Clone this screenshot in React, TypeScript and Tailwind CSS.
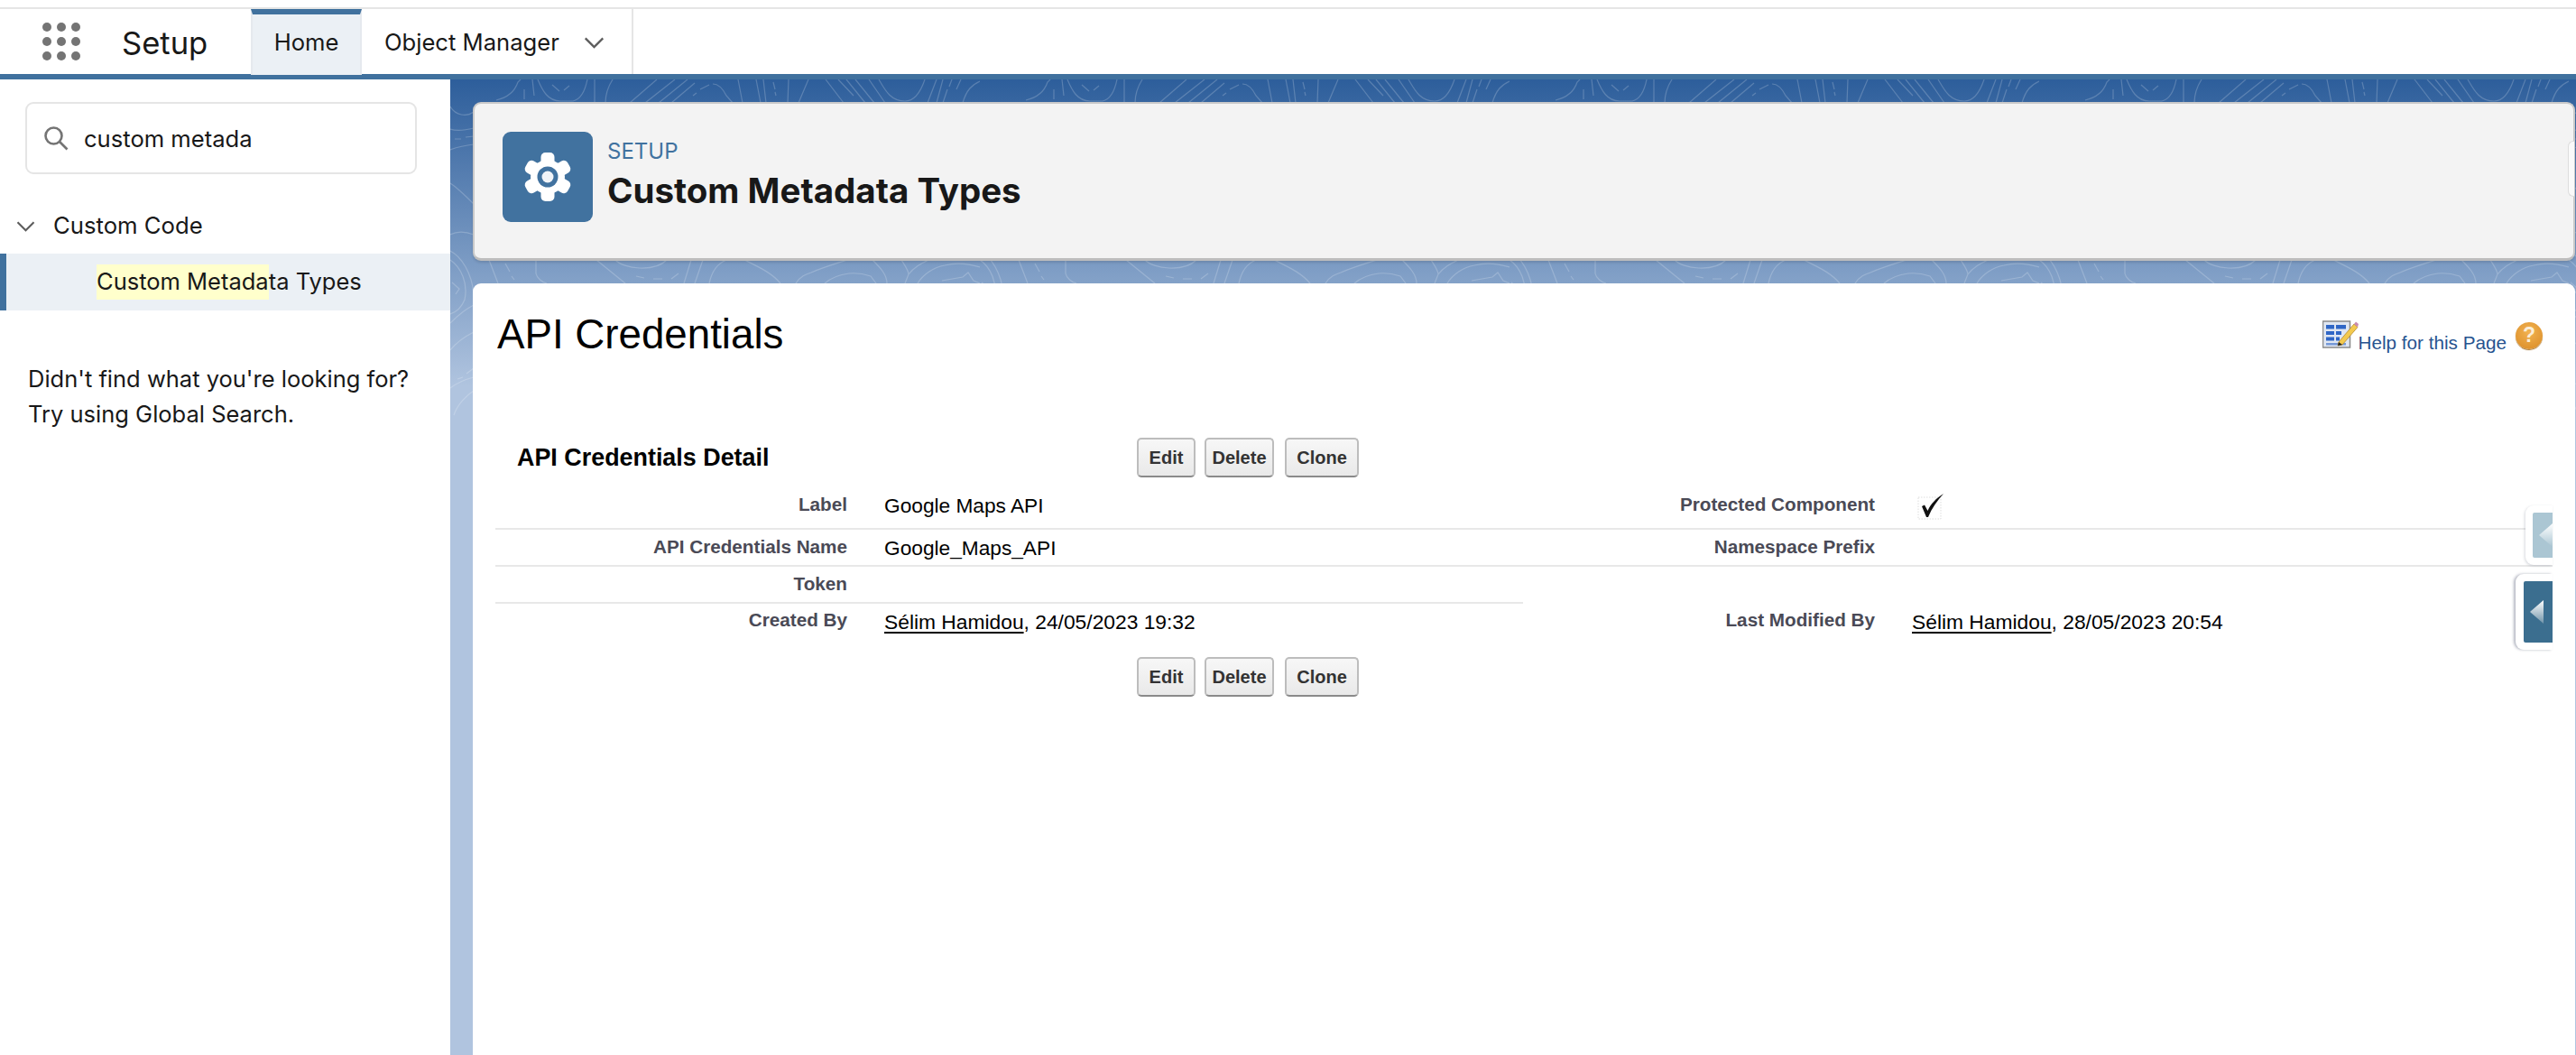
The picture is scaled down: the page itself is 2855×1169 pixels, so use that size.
const Dots = () => (
  <div className="grid grid-cols-3 gap-x-[6px] gap-y-[6px] w-[42px]">
    {Array.from({ length: 9 }).map((_, i) => (
      <span key={i} className="w-[10px] h-[10px] rounded-full bg-[#747474]" />
    ))}
  </div>
);

const Chevron = ({ className }: { className: string }) => (
  <svg viewBox="0 0 24 14" className={className} fill="none" stroke="#5c5c5c" strokeWidth="2.4">
    <path d="M1.5 1.5 L12 12 L22.5 1.5" />
  </svg>
);

const Gear = () => (
  <svg viewBox="0 0 56 56" className="w-[56px] h-[56px]">
    <g fill="#ffffff">
      {[0, 60, 120, 180, 240, 300].map((a) => (
        <rect key={a} x="20.5" y="1" width="15" height="18" rx="5" transform={`rotate(${a} 28 28)`} />
      ))}
      <circle cx="28" cy="28" r="19" />
    </g>
    <circle cx="28" cy="28" r="11.5" fill="#41729f" />
    <circle cx="28" cy="28" r="6.5" fill="#f1f4f8" />
  </svg>
);

const topoLines = [
  // top strip
  "M78 0 L75 3 C72 12 64 20 51 23",
  "M82 11 L82 22 M91 0 L93 18",
  "M97 0 C102 12 108 24 122 24 L136 24 C146 22 150 10 152 0",
  "M113 6 L121 13 M126 12 L132 7",
  "M160 0 L160 26 M180 0 C175 8 172 16 172 26",
  "M199 26 L229 0 M216 26 L249 0 M231 26 L263 0 M245 26 L271 4",
  "M269 18 L273 15 M277 11 L287 6 M291 5 C298 5 303 12 306 18 L313 26",
  "M319 0 L324 26 M339 0 L344 26 M347 0 L350 26 M358 3 L360 11 M360 14 L361 18 M375 0 L374 26 M397 0 L386 26",
  "M416 0 L436 26 M430 0 L447 18 M439 0 L460 26 M449 0 L470 26 M464 0 L482 26",
  "M475 0 C482 12 488 24 504 24 C516 24 522 12 526 0",
  "M529 26 L539 0 M539 26 L546 0 M546 26 L551 11 M553 8 L556 0 M566 0 L561 11 M568 26 C572 12 578 6 587 2",
  // left strip
  "M0 30 C6 40 18 42 26 36 M0 55 C8 58 18 56 26 54 M5 66 L12 66 M17 64 L26 63 M0 78 C8 75 16 73 26 72",
  "M0 115 C8 120 18 130 26 138 M0 172 C8 168 18 169 26 172",
  "M0 190 C12 196 24 214 26 238 M0 200 C12 208 20 226 16 244 C12 254 6 258 0 260 M2 225 L10 232 L6 238",
  "M0 270 C8 262 18 254 26 250 M0 300 C8 290 18 284 26 280 M8 332 L14 330 M18 326 L26 320 M0 342 C8 336 18 332 26 330 M4 372 C8 360 18 350 26 345",
  // bottom strip
  "M43 200 L53 226 M61 204 L66 213 M68 218 L71 222",
  "M95 200 L95 215 C96 220 102 225 107 226",
  "M162 200 L194 226 M206 218 L215 220 M225 221 L235 221 M245 221 L253 215",
  "M183 200 C192 210 226 214 240 200",
  "M259 226 L267 200 M271 226 L280 200 M287 226 C290 212 296 204 306 200",
  "M326 200 C342 208 356 214 366 226",
  "M383 226 C388 218 394 216 400 214 C414 208 428 204 440 200",
  "M415 226 C424 218 434 216 442 215 C452 214 460 216 466 218 L472 226",
  "M468 200 C476 208 484 216 484 226",
  "M500 200 C505 208 508 212 508 216 L504 226 M508 216 C514 208 522 204 530 200",
  "M518 226 C524 216 536 208 548 206 C560 203 574 204 587 208",
  "M545 223 L568 219 L574 214 L580 223 L587 226",
];

const TopoPattern = () => (
  <svg className="absolute inset-0 w-full h-full" aria-hidden="true">
    <defs>
      <pattern id="topo" x="0" y="0" width="587" height="420" patternUnits="userSpaceOnUse">
        <g fill="none" stroke="#ffffff" strokeOpacity="0.2" strokeWidth="1.2">
          {topoLines.map((d) => (
            <path key={d} d={d} />
          ))}
        </g>
      </pattern>
    </defs>
    <rect width="100%" height="420" fill="url(#topo)" />
  </svg>
);

const BookIcon = () => (
  <svg viewBox="0 0 40 32" className="w-[40px] h-[32px] shrink-0">
    <rect x="0.5" y="1" width="30" height="29" fill="#dfe6f2" stroke="#8a8a8a" strokeWidth="1.5" />
    <g fill="#2f66c6">
      <rect x="4" y="5" width="9" height="4.5" />
      <rect x="15" y="5" width="11" height="4.5" />
      <rect x="4" y="12" width="9" height="4" />
      <rect x="15" y="12" width="6" height="4" />
      <rect x="4" y="18.5" width="9" height="4" />
      <rect x="15" y="18.5" width="4" height="4" />
      <rect x="4" y="25" width="22" height="2.5" opacity="0.6" />
    </g>
    <path d="M18 24 L35 4 L39 7.5 L22 27 L17 28 Z" fill="#f3c94e" stroke="#b58a2e" strokeWidth="0.8" />
    <path d="M35 4 L37 1.5 L40 4 L39 7.5 Z" fill="#c98bb0" />
    <path d="M18 24 L17 28 L22 27 Z" fill="#222222" />
  </svg>
);

const HelpCircle = () => (
  <span className="w-[30px] h-[30px] rounded-full bg-[radial-gradient(circle_at_50%_35%,#f2b352,#d98a24)] shadow-[0_1px_1px_#a8762f] flex items-center justify-center text-[#fbeed8] text-[23px] font-bold font-['Liberation_Sans',sans-serif] ml-[10px]">
    ?
  </span>
);

const buttons = [
  { name: "Edit", cls: "w-[65px]" },
  { name: "Delete", cls: "w-[77px] ml-[10px]" },
  { name: "Clone", cls: "w-[82px] ml-[12px]" },
];

const Buttons = () => (
  <div className="flex">
    {buttons.map((b) => (
      <button
        key={b.name}
        className={`${b.cls} h-[44px] rounded-[5px] border-2 border-[#bdbdbd] border-b-[#8a8a8a] bg-[linear-gradient(180deg,#f7f7f7,#e9e9e9)] text-[20px] font-bold text-[#333333] flex items-center justify-center`}
      >
        {b.name}
      </button>
    ))}
  </div>
);

const Label = ({ children }: { children: React.ReactNode }) => (
  <div className="w-[390px] shrink-0 text-right text-[20.7px] font-bold text-[#4a4a56] pb-[2px]">{children}</div>
);

const Person = ({ date }: { date: string }) => (
  <div className="pl-[41px] text-[22.8px] text-black pt-[2px]">
    <span className="underline underline-offset-[3px]">Sélim Hamidou</span>, {date}
  </div>
);

const Value = ({ children }: { children: React.ReactNode }) => (
  <div className="pl-[41px] text-[22.7px] text-black pt-[1px]">{children}</div>
);

export default function App() {
  return (
    <div className="w-[2855px] h-[1169px] flex flex-col overflow-hidden bg-white font-['Inter',sans-serif] text-[#181818]">
      <div className="h-[10px] shrink-0 border-b-2 border-[#e5e5e5]" />
      <header className="h-[78px] shrink-0 flex border-b-[6px] border-[#40719e]">
        <div className="w-[278px] shrink-0 flex items-center pl-[47px]">
          <Dots />
          <span className="ml-[46px] text-[34.6px] leading-none pt-[2px]">Setup</span>
        </div>
        <div className="w-[123px] shrink-0 border-t-[6px] border-[#40719e] bg-[#ebf0f5] flex items-center justify-center text-[25.6px] border-x-2 border-x-[#e5e9ee] -mb-px">
          <span className="-mt-[4px]">Home</span>
        </div>
        <div className="w-[301px] shrink-0 border-r-2 border-[#e5e5e5] flex items-center pl-[25px] text-[25.6px]">
          <span className="w-[221px] pt-[2px]">Object Manager</span>
          <Chevron className="w-[23px] h-[13px] mt-[2px]" />
        </div>
      </header>
      <div className="flex-1 flex min-h-0">
        <aside className="w-[499px] shrink-0 flex flex-col pt-[25px]">
          <div className="ml-[28px] mr-[37px] h-[80px] rounded-[9px] border-2 border-[#e5e5e5] flex items-center pl-[18px]">
            <svg viewBox="0 0 28 28" className="w-[28px] h-[28px]" fill="none" stroke="#747474" strokeWidth="2.6">
              <circle cx="11.5" cy="11.5" r="9" />
              <path d="M18 18 L26.5 26.5" />
            </svg>
            <span className="ml-[17px] text-[25.6px] pt-[2px]">custom metada</span>
          </div>
          <div className="h-[88px] flex items-center pl-[18px] pt-[26px]">
            <Chevron className="w-[21px] h-[12px] mr-[20px] mt-[2px]" />
            <span className="text-[25.7px] pt-[1px]">Custom Code</span>
          </div>
          <div className="h-[63px] bg-[#ebf0f5] border-l-[7px] border-[#40719e] flex items-center pl-[100px] text-[25.5px]">
            <span className="bg-[#ffffcc]">Custom Metada</span>ta Types
          </div>
          <p className="mt-[56px] pl-[31px] text-[25.5px] leading-[39px]">
            Didn't find what you're looking for?
            <br />
            Try using Global Search.
          </p>
        </aside>
        <main className="relative flex-1 min-w-0 flex flex-col pl-[25px] pr-[1px] pt-[25px] bg-[linear-gradient(180deg,#2d5e9b_0px,#b0c4df_340px)]">
          <TopoPattern />
          <section className="relative h-[176px] shrink-0 rounded-[9px] bg-[#f3f3f3] border-2 border-[#c9c9c9] border-b-[3px] border-b-[#bdbdbd] flex pt-[31px] pl-[31px] shadow-[0_2px_3px_rgba(0,0,0,0.12)]">
            <div className="w-[100px] h-[100px] rounded-[9px] bg-[#41729f] flex items-center justify-center">
              <Gear />
            </div>
            <div className="ml-[16px] pt-[6px]">
              <div className="text-[24px] leading-[32px] text-[#41729f]">SETUP</div>
              <div className="text-[38.5px] leading-[48px] font-bold text-[#181818] mt-[3px]">Custom Metadata Types</div>
            </div>
            <div className="absolute -right-px top-[41px] w-[7px] h-[62px] rounded-l-[6px] bg-[#fafafa] border-l border-y border-[#dddddd]" />
          </section>
          <section className="relative mt-[25px] flex-1 rounded-t-[9px] bg-white px-[25px] font-['Liberation_Sans',sans-serif] text-black">
            <div className="h-[64px] mt-[25px] flex items-center justify-between">
              <h1 className="text-[45.7px] leading-none pl-[2px]">API Credentials</h1>
              <div className="flex items-end pr-[11px] pb-[1px]">
                <BookIcon />
                <span className="text-[20.7px] text-[#27538f] leading-none -mb-[4px]">Help for this Page</span>
                <HelpCircle />
              </div>
            </div>
            <div className="mt-[82px] h-[44px] flex items-center">
              <h2 className="w-[711px] pl-[24px] text-[26.9px] font-bold">API Credentials Detail</h2>
              <Buttons />
            </div>
            <div className="mt-[6px]">
              <div className="flex">
                <div className="w-[1139px] shrink-0 h-[52px] flex items-center border-b-2 border-[#e8e8e8]">
                  <Label>Label</Label>
                  <Value>Google Maps API</Value>
                </div>
                <div className="flex-1 h-[52px] flex items-center border-b-2 border-[#e8e8e8]">
                  <Label>Protected Component</Label>
                  <div className="pl-[47px]">
                    <svg viewBox="0 0 30 30" className="w-[30px] h-[30px] mt-[2px]">
                      <rect x="1" y="5" width="25" height="24" fill="none" stroke="#dddddd" strokeWidth="1" strokeDasharray="1.5 1.5" />
                      <path d="M5 15 L8 13.5 L11.5 20 C15 12 21 6 29 1 C22 9 16 17 12 27 L10 27 Z" fill="#111111" />
                    </svg>
                  </div>
                </div>
              </div>
              <div className="flex">
                <div className="w-[1139px] shrink-0 h-[41px] flex items-center border-b-2 border-[#e8e8e8]">
                  <Label>API Credentials Name</Label>
                  <Value>Google_Maps_API</Value>
                </div>
                <div className="flex-1 h-[41px] flex items-center border-b-2 border-[#e8e8e8]">
                  <Label>Namespace Prefix</Label>
                </div>
              </div>
              <div className="flex">
                <div className="w-[1139px] shrink-0 h-[41px] flex items-center border-b-2 border-[#e8e8e8]">
                  <Label>Token</Label>
                </div>
              </div>
              <div className="flex h-[38px]">
                <div className="w-[1139px] shrink-0 flex items-center">
                  <Label>Created By</Label>
                  <Person date="24/05/2023 19:32" />
                </div>
                <div className="flex-1 flex items-center">
                  <Label>Last Modified By</Label>
                  <Person date="28/05/2023 20:54" />
                </div>
              </div>
            </div>
            <div className="mt-[21px] pl-[711px]">
              <Buttons />
            </div>
            <div className="absolute right-[25px] top-[246px] w-[30px] h-[66px] rounded-l-[9px] bg-white shadow-[-1px_1px_3px_rgba(40,50,80,0.18)] flex items-center justify-end">
              <div className="w-[22px] h-[50px] rounded-l-[2px] bg-[#abc6d3] flex items-center justify-end">
                <svg viewBox="0 0 15 26" className="w-[15px] h-[26px]">
                  <defs>
                    <linearGradient id="arrowA" x1="0" y1="0" x2="0" y2="1">
                      <stop offset="0" stopColor="#ffffff" />
                      <stop offset="1" stopColor="#abc6d3" />
                    </linearGradient>
                  </defs>
                  <path d="M0 13 L15 0 V26 Z" fill="url(#arrowA)" />
                </svg>
              </div>
            </div>
            <div className="absolute right-[25px] top-[322px] w-[41px] h-[84px] rounded-l-[9px] bg-white shadow-[-2px_0_3px_rgba(40,50,80,0.35)] flex items-center justify-end">
              <div className="w-[32px] h-[68px] rounded-l-[2px] bg-[#3b6e8f] flex items-center pl-[7px]">
                <svg viewBox="0 0 15 26" className="w-[15px] h-[26px]">
                  <defs>
                    <linearGradient id="arrowB" x1="0" y1="0" x2="0" y2="1">
                      <stop offset="0" stopColor="#ffffff" />
                      <stop offset="1" stopColor="#6f93a9" />
                    </linearGradient>
                  </defs>
                  <path d="M0 13 L15 0 V26 Z" fill="url(#arrowB)" />
                </svg>
              </div>
            </div>
          </section>
        </main>
      </div>
    </div>
  );
}
